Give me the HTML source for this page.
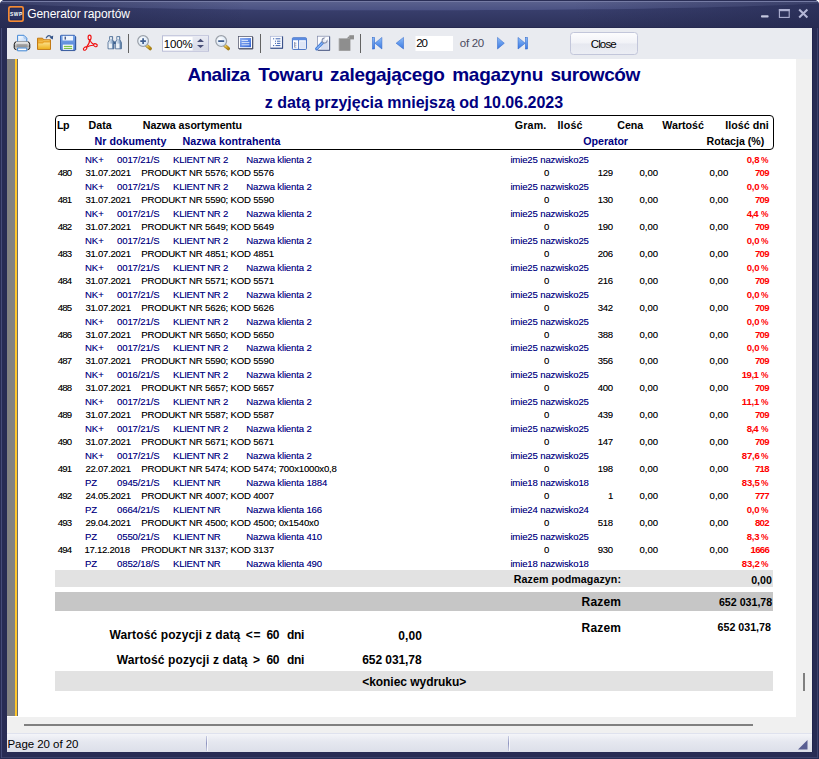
<!DOCTYPE html>
<html lang="pl">
<head>
<meta charset="utf-8">
<title>Generator raportów</title>
<style>
html,body{margin:0;padding:0;}
body{width:819px;height:759px;position:relative;overflow:hidden;background:#fff;font-family:"Liberation Sans",Arial,sans-serif;}
#win{position:absolute;left:0;top:0;width:819px;height:759px;background:#282c54;border-radius:5px 5px 0 0;overflow:hidden;}
#tgrad{position:absolute;left:0;top:0;width:819px;height:28px;background:linear-gradient(#3a3f6b 0px,#4c5380 2px,#474e7b 5px,#2f345d 9px,#282c54 13px,#282c54 28px);}
#lb{position:absolute;left:0;top:10px;width:1px;height:749px;background:#3a3f68;}
.t{position:absolute;white-space:pre;font-family:"Liberation Sans",Arial,sans-serif;}
#toolbar{position:absolute;left:7px;top:28px;width:805px;height:31px;background:#e9ebf0;}
#viewer{position:absolute;left:7px;top:59px;width:805px;height:674px;background:#f0f0f0;}
#gray{position:absolute;left:0;top:0;width:8px;height:657px;background:#828282;}
#yel{position:absolute;left:8px;top:0;width:2px;height:657px;background:#ffc72c;}
#dk{position:absolute;left:10px;top:0;width:1px;height:657px;background:#6a6a6a;}
#page{position:absolute;left:11px;top:0;width:778px;height:658px;background:#fff;}
#status{position:absolute;left:7px;top:733px;width:805px;height:19px;background:linear-gradient(#f4f5f9 0,#e6e8f0 40%,#dcdfe9 100%);border-top:1px solid #dfe2ee;box-sizing:border-box;}
.s{text-shadow:0 0 0 currentColor;}
.band{position:absolute;left:55px;width:718px;}
.sep{position:absolute;top:34px;width:1px;height:19px;background:#6c6c6c;}
.ico{position:absolute;}
</style>
</head>
<body>
<div id="win">
  <div style="position:absolute;left:1px;top:4px;width:1px;height:754px;background:#454b77;"></div><div style="position:absolute;left:817px;top:4px;width:1px;height:754px;background:#3e446e;"></div><div style="position:absolute;left:2px;top:757px;width:815px;height:1px;background:#3a406a;"></div><div style="position:absolute;left:812px;top:28px;width:1px;height:724px;background:#20244c;"></div>
  <!-- title bar -->
  <svg class="ico" style="left:0;top:0" width="819" height="28" viewBox="0 0 819 28">
    <defs>
      <linearGradient id="tb1" x1="0" y1="0" x2="0" y2="1"><stop offset="0" stop-color="#3b416f"/><stop offset="0.35" stop-color="#383e6c"/><stop offset="1" stop-color="#2c3159"/></linearGradient>
      <linearGradient id="tb3" x1="0" y1="0" x2="1" y2="0"><stop offset="0" stop-color="#22264c" stop-opacity="0.55"/><stop offset="0.3" stop-color="#22264c" stop-opacity="0"/><stop offset="0.7" stop-color="#22264c" stop-opacity="0"/><stop offset="1" stop-color="#22264c" stop-opacity="0.55"/></linearGradient>
      <linearGradient id="tb2" x1="0" y1="0" x2="0" y2="1"><stop offset="0" stop-color="#5b628e"/><stop offset="1" stop-color="#4a5183"/></linearGradient>
    </defs>
    <rect x="0" y="0" width="819" height="28" fill="url(#tb1)"/>
    <path d="M0 1 L819 1 L819 3.5 C760 6.5 640 10.3 410 10.3 C180 10.3 60 6.5 0 3.5 Z" fill="url(#tb2)"/>
    <rect x="0" y="2" width="819" height="25" fill="url(#tb3)"/>
    <rect x="0" y="0" width="819" height="1" fill="#2a2e56"/>
    <rect x="0" y="1" width="819" height="1" fill="#7a80a8" opacity="0.85"/>
    <rect x="0" y="27" width="819" height="1" fill="#262a50"/>
  </svg>
  <!-- app icon -->
  <svg class="ico" style="left:8px;top:6px" width="16" height="16" viewBox="0 0 16 16">
    <rect x="0.9" y="0.9" width="14.2" height="14.2" rx="1.4" fill="#2b3261" stroke="#f58a33" stroke-width="1.8"/>
    <rect x="2.3" y="2.3" width="11.4" height="11.4" rx="0.6" fill="none" stroke="#1d2858" stroke-width="0.7"/>
    <text x="8.4" y="9.9" font-size="4.9" font-weight="bold" fill="#ffffff" text-anchor="middle" letter-spacing="0.5" font-family="Liberation Sans, sans-serif">SWP</text>
  </svg>
  <!-- window buttons -->
  <svg class="ico" style="left:756px;top:4px" width="56" height="18" viewBox="0 0 56 18">
    <rect x="5" y="11.2" width="7.6" height="2.4" rx="0.8" fill="#c4c7de"/>
    <rect x="23.4" y="5.6" width="9.8" height="7.8" fill="none" stroke="#aeb1d2" stroke-width="1.1"/>
    <rect x="22.9" y="5" width="10.8" height="2.2" fill="#aeb1d2"/>
    <path d="M43.2 5.6 L51.4 13.4 M51.4 5.6 L43.2 13.4" stroke="#b4b7d6" stroke-width="2.1" fill="none"/>
  </svg>

  <div id="toolbar"></div>
  <svg class="ico" style="left:7px;top:28px" width="805" height="31" viewBox="7 28 805 31">
    <defs>
      <linearGradient id="gPr" x1="0" y1="0" x2="0" y2="1"><stop offset="0" stop-color="#fbfbfb"/><stop offset="0.3" stop-color="#d2d2d2"/><stop offset="0.6" stop-color="#b0b0b0"/><stop offset="1" stop-color="#e2e2e2"/></linearGradient>
      <linearGradient id="gPa" x1="0" y1="0" x2="1" y2="1"><stop offset="0" stop-color="#ffffff"/><stop offset="1" stop-color="#b7d3f7"/></linearGradient>
      <linearGradient id="gFo" x1="0" y1="0" x2="0" y2="1"><stop offset="0" stop-color="#fbe08a"/><stop offset="1" stop-color="#eeb21f"/></linearGradient>
      <linearGradient id="gFl" x1="0" y1="0" x2="0" y2="1"><stop offset="0" stop-color="#7aa6e8"/><stop offset="1" stop-color="#4f80d4"/></linearGradient>
      <linearGradient id="gBi" x1="0" y1="0" x2="1" y2="0"><stop offset="0" stop-color="#f2f6fb"/><stop offset="0.55" stop-color="#a9bfd8"/><stop offset="1" stop-color="#4a6e9c"/></linearGradient>
      <radialGradient id="gLe" cx="0.4" cy="0.35" r="0.7"><stop offset="0" stop-color="#ffffff"/><stop offset="1" stop-color="#cfe0f4"/></radialGradient>
      <linearGradient id="gHa" x1="0" y1="0" x2="1" y2="1"><stop offset="0" stop-color="#f0d060"/><stop offset="1" stop-color="#b8860b"/></linearGradient>
      <linearGradient id="gFs" x1="0" y1="0" x2="1" y2="1"><stop offset="0" stop-color="#8fb0f4"/><stop offset="1" stop-color="#2f62d6"/></linearGradient>
      <linearGradient id="gNv" x1="0" y1="0" x2="0" y2="1"><stop offset="0" stop-color="#8cbcf8"/><stop offset="1" stop-color="#3a78e2"/></linearGradient>
      <linearGradient id="gSp" x1="0" y1="0" x2="0" y2="1"><stop offset="0" stop-color="#e9ebf3"/><stop offset="1" stop-color="#d5d8e6"/></linearGradient>
      <linearGradient id="gBt" x1="0" y1="0" x2="0" y2="1"><stop offset="0" stop-color="#fdfdfe"/><stop offset="0.48" stop-color="#f1f2f7"/><stop offset="0.52" stop-color="#e6e8f0"/><stop offset="1" stop-color="#eceef4"/></linearGradient>
    </defs>
    <!-- printer -->
    <g>
      <path d="M17.6 42.4 L17.6 35.3 L24 35.3 L26.8 38.2 L26.8 42.4 Z" fill="url(#gPa)" stroke="#3f86d6" stroke-width="1"/>
      <path d="M24 35.5 L24 38.2 L26.6 38.2" fill="none" stroke="#8ab4e8" stroke-width="0.7"/>
      <path d="M16.4 41.6 L27.6 41.6 Q29.9 41.9 29.9 44.6 L29.9 47.6 Q29.9 49.8 27.6 49.8 L16.4 49.8 Q14.1 49.8 14.1 47.6 L14.1 44.6 Q14.1 41.9 16.4 41.6 Z" fill="url(#gPr)" stroke="#4a4a4a" stroke-width="0.5"/>
      <path d="M16.2 41.8 Q14.3 42.2 14.3 44.6 L14.3 47.6 Q14.3 49.4 16.2 49.6" fill="none" stroke="#2a2a2a" stroke-width="1"/>
      <path d="M27.8 41.8 Q29.7 42.2 29.7 44.6 L29.7 47.6 Q29.7 49.4 27.8 49.6" fill="none" stroke="#2a2a2a" stroke-width="1"/>
      <rect x="16.6" y="44.2" width="10.8" height="3" fill="#8f8f8f" opacity="0.75"/>
      <path d="M17.6 48 L17.6 50.8 L26.8 50.8 L26.8 48 Z" fill="#fff" stroke="#3f86d6" stroke-width="1"/>
    </g>
    <!-- open folder -->
    <g>
      <path d="M37.5 49.4 L37.5 38.2 L42.6 38.2 L43.8 39.8 L50.5 39.8 L50.5 49.4 Z" fill="#e9a52a" stroke="#c27a16" stroke-width="1"/>
      <path d="M38.2 49 L38.2 43.6 L42.8 43.6 L44 42.4 L49.9 42.4 L49.9 49 Z" fill="url(#gFo)"/>
      <path d="M38.6 41.2 L42.4 41.2 L43.4 40.6 L49.6 40.6" fill="none" stroke="#f4c860" stroke-width="0.8"/>
      <path d="M46 38.2 Q48.6 33.4 51.8 37.4" fill="none" stroke="#3b5a8c" stroke-width="1.1"/>
      <path d="M53.2 35.6 L52.8 39.4 L49.6 37.8 Z" fill="#2f4f86"/>
    </g>
    <!-- floppy -->
    <g>
      <path d="M60.5 36 Q60.5 35.3 61.2 35.3 L74.4 35.3 L75.5 36.4 L75.5 49.6 Q75.5 50.3 74.8 50.3 L61.2 50.3 Q60.5 50.3 60.5 49.6 Z" fill="url(#gFl)" stroke="#3a64b4" stroke-width="1"/>
      <rect x="62.6" y="35.9" width="10.4" height="4.6" fill="#eef4fd"/>
      <rect x="64.6" y="36.6" width="1.3" height="3" fill="#3a4f80"/>
      <rect x="62.8" y="44.6" width="10.4" height="5.2" fill="#ffffff"/>
      <rect x="63.8" y="45.8" width="8.4" height="1.2" fill="#7cc24a"/>
      <rect x="63.8" y="47.8" width="8.4" height="1.2" fill="#7cc24a"/>
      <path d="M61 50.6 L75.2 50.6 M75.8 36.8 L75.8 50" stroke="#2c4a86" stroke-width="0.8" opacity="0.7"/>
    </g>
    <!-- pdf -->
    <g fill="none" stroke="#f01414" stroke-width="1.15">
      <ellipse cx="89.6" cy="37.4" rx="1.5" ry="2.3"/>
      <ellipse cx="95.4" cy="45.2" rx="1.9" ry="1.4" transform="rotate(20 95.4 45.2)"/>
      <ellipse cx="85.1" cy="48.6" rx="1.9" ry="1.3" transform="rotate(-40 85.1 48.6)"/>
      <path d="M89.6 39.6 Q89.8 43.5 86.3 47.4"/>
      <path d="M89.7 39.6 Q91 43 93.7 44.6"/>
      <path d="M86.6 47.2 Q90 45.2 93.6 45.3"/>
    </g>
    <!-- binoculars -->
    <g>
      <path d="M108 48.8 L108 42.5 L109.6 39.6 L109.6 36.6 L112.6 36.6 L112.6 39.6 L114 42.5 L114 48.8 Z" fill="url(#gBi)" stroke="#44668f" stroke-width="0.8"/>
      <path d="M115.4 48.8 L115.4 42.5 L116.8 39.6 L116.8 36.6 L119.8 36.6 L119.8 39.6 L121.4 42.5 L121.4 48.8 Z" fill="url(#gBi)" stroke="#44668f" stroke-width="0.8"/>
      <rect x="113.6" y="41.4" width="2.2" height="2.6" fill="#3d618f"/>
      <rect x="109" y="43.6" width="3" height="4.6" fill="#f4f8fc" opacity="0.85"/>
      <rect x="116.4" y="43.6" width="3" height="4.6" fill="#f4f8fc" opacity="0.85"/>
      <rect x="110.2" y="37.2" width="1.6" height="2" fill="#fff" opacity="0.8"/>
      <rect x="117.4" y="37.2" width="1.6" height="2" fill="#fff" opacity="0.8"/>
    </g>
    <rect x="128" y="34" width="1" height="19" fill="#636363"/>
    <!-- zoom in -->
    <g>
      <path d="M146.6 45.4 L150.2 48.6" stroke="#9a7a1c" stroke-width="3.4" stroke-linecap="round"/>
      <path d="M146.9 45.6 L150 48.4" stroke="url(#gHa)" stroke-width="2.2" stroke-linecap="round"/>
      <circle cx="143.1" cy="41.1" r="5.4" fill="url(#gLe)" stroke="#9ba1a9" stroke-width="1.2"/>
      <path d="M140.3 41.1 L145.9 41.1 M143.1 38.3 L143.1 43.9" stroke="#3d5c8e" stroke-width="1.7"/>
    </g>
    <!-- zoom combo -->
    <rect x="162.5" y="35.8" width="46" height="15.4" fill="#fff" stroke="#b9bdd6" stroke-width="1"/>
    <rect x="192.6" y="36.3" width="15.4" height="14.4" fill="url(#gSp)"/>
    <path d="M197 42 L200.5 38.8 L204 42 Z M197 45 L200.5 48 L204 45 Z" fill="#4a5078"/>
    <!-- zoom out -->
    <g>
      <path d="M224.7 45.4 L228.3 48.6" stroke="#9a7a1c" stroke-width="3.4" stroke-linecap="round"/>
      <path d="M225 45.6 L228.1 48.4" stroke="url(#gHa)" stroke-width="2.2" stroke-linecap="round"/>
      <circle cx="221.2" cy="41.1" r="5.4" fill="url(#gLe)" stroke="#9ba1a9" stroke-width="1.2"/>
      <path d="M218.2 41.1 L224.2 41.1" stroke="#3d5c8e" stroke-width="1.8"/>
    </g>
    <!-- full screen -->
    <g>
      <rect x="238.6" y="36.6" width="13.8" height="12" fill="#fdfdff" stroke="#4a4f66" stroke-width="0.7"/>
      <rect x="240" y="38" width="11" height="9.2" fill="url(#gFs)"/>
      <path d="M241.6 40.4 L248 40.4 M241.6 42.6 L249.4 42.6 M241.6 44.8 L249.4 44.8" stroke="#e8eefc" stroke-width="0.9"/>
      <path d="M239 49 L252.8 49 M252.8 37 L252.8 49" stroke="#30354f" stroke-width="0.8"/>
    </g>
    <rect x="260" y="34" width="1" height="19" fill="#636363"/>
    <!-- outline -->
    <g>
      <rect x="270.6" y="36.3" width="11.6" height="11.6" fill="#fbfcff" stroke="#a8b4d4" stroke-width="0.7"/>
      <path d="M270.4 48.3 L282.8 48.3 M282.6 36.4 L282.6 48.4" stroke="#2e4680" stroke-width="1"/>
      <path d="M273 38.8 L274.2 38.8 M275.6 38.8 L280.4 38.8 M275 41.2 L276 41.2 M277 41.2 L280.4 41.2 M275 43.4 L276 43.4 M277 43.4 L280.4 43.4 M273 45.6 L274.2 45.6 M275.6 45.6 L280.4 45.6" stroke="#3f64b0" stroke-width="1"/>
    </g>
    <!-- thumbnails -->
    <g>
      <rect x="292.4" y="37.8" width="14" height="11.6" rx="0.8" fill="#fdfdff" stroke="#3f6cc0" stroke-width="1"/>
      <rect x="292.4" y="37.8" width="14" height="2.4" fill="#5b8be0"/>
      <path d="M298.6 40 L298.6 49.4" stroke="#3f6cc0" stroke-width="0.9"/>
      <rect x="299.8" y="41.4" width="5.6" height="7" fill="#dfe6f6"/>
      <path d="M294.6 42 L294.6 47.4 M294.6 43.2 L296.4 43.2 M294.6 45.2 L296.4 45.2 M294.6 47.2 L296.4 47.2" stroke="#7a86a8" stroke-width="0.8" fill="none"/>
    </g>
    <!-- page setup wrench -->
    <g>
      <rect x="317.6" y="36.2" width="11.8" height="13.8" fill="#fbfcff" stroke="#7f88a8" stroke-width="0.7"/>
      <rect x="320.6" y="41" width="8" height="8.2" fill="#d8def0"/>
      <path d="M329.7 36.6 L329.7 50.4 M317.8 50.4 L329.8 50.4" stroke="#3a4a78" stroke-width="0.8"/>
      <path d="M316.6 48.8 L322.6 42.6" stroke="#3f7ad8" stroke-width="3" stroke-linecap="round"/>
      <path d="M316.9 48.5 L322.4 42.9" stroke="#8db6f2" stroke-width="1.2" stroke-linecap="round"/>
      <circle cx="324.6" cy="40.6" r="2.5" fill="#e8ecf6" stroke="#8a92ac" stroke-width="1.1"/>
      <rect x="324.8" y="37.4" width="2.8" height="2.6" fill="#fbfcff" transform="rotate(45 326 38.6)"/>
    </g>
    <!-- disabled icon -->
    <g fill="#8e8e8e">
      <path d="M339 38.4 L350.4 38.4 L350.4 50.8 L339 50.8 Z"/>
      <path d="M349.4 35.2 L354 35.2 L354 39.4 L349.4 39.4 Z"/>
      <path d="M346.6 38.4 L349.6 35.4 L349.6 38.4 Z"/>
      <rect x="338.6" y="38.4" width="0.8" height="12.4" fill="#b4b4b4"/>
    </g>
    <rect x="360" y="34" width="1" height="19" fill="#636363"/>
    <!-- nav -->
    <g fill="url(#gNv)" stroke="#2a62c8" stroke-width="0.5">
      <rect x="372.5" y="37.4" width="2.2" height="11.6"/>
      <path d="M381.9 37.4 L381.9 49 L374.9 43.2 Z"/>
      <path d="M403.5 37.4 L403.5 49 L396.1 43.2 Z"/>
      <path d="M497.5 37.4 L497.5 49 L504.3 43.2 Z"/>
      <path d="M518 37.4 L518 49 L525.2 43.2 Z"/>
      <rect x="525.4" y="37.4" width="2.2" height="11.6"/>
    </g>
    <!-- page input -->
    <rect x="415.5" y="36" width="37.5" height="15" fill="#fff"/>
    <!-- close button -->
    <rect x="570.5" y="32.5" width="67" height="22" rx="3" fill="url(#gBt)" stroke="#c2c6da" stroke-width="1"/>
  </svg>

  <div id="viewer">
    <div style="position:absolute;left:0;top:657px;width:11px;height:1px;background:#fff;"></div><div id="gray"></div><div id="yel"></div><div id="dk"></div><div id="page"></div>
    <!-- scroll thumbs -->
    <div style="position:absolute;left:796px;top:614px;width:2px;height:18px;background:#808080;"></div>
    <div style="position:absolute;left:17px;top:665px;width:729px;height:2px;background:#808080;"></div>
  </div>
  <!-- header box -->
  <div style="position:absolute;left:55px;top:115px;width:719px;height:35px;box-sizing:border-box;border:1px solid #000;border-radius:4px;"></div>
  <!-- bands -->
  <div class="band" style="top:570px;height:17px;background:#e2e2e2;"></div>
  <div class="band" style="top:592px;height:19px;background:#c6c6c6;"></div>
  <div class="band" style="top:671px;height:20px;background:#e2e2e2;"></div>

  <div id="status">
    <div style="position:absolute;left:199px;top:2px;width:1px;height:15px;background:linear-gradient(#c9cde2,#8e94c0 50%,#c9cde2);"></div><div style="position:absolute;left:200px;top:2px;width:1px;height:15px;background:#f6f7fb;"></div>
    <div style="position:absolute;left:501px;top:2px;width:1px;height:15px;background:linear-gradient(#c9cde2,#8e94c0 50%,#c9cde2);"></div><div style="position:absolute;left:502px;top:2px;width:1px;height:15px;background:#f6f7fb;"></div>
    <svg class="ico" style="left:790px;top:5px" width="12" height="12" viewBox="0 0 12 12"><path d="M10.5 1 L10.5 10.5 L1 10.5Z" fill="#585e92"/></svg>
  </div>
<span class="t" style="top:65px;font-size:19px;line-height:19px;color:#000080;font-weight:bold;letter-spacing:-0.650px;left:187.50px;">Analiza</span>
<span class="t" style="top:65px;font-size:19px;line-height:19px;color:#000080;font-weight:bold;letter-spacing:-0.200px;left:258.20px;">Towaru</span>
<span class="t" style="top:65px;font-size:19px;line-height:19px;color:#000080;font-weight:bold;letter-spacing:-0.309px;left:330.00px;">zalegającego</span>
<span class="t" style="top:65px;font-size:19px;line-height:19px;color:#000080;font-weight:bold;letter-spacing:-0.257px;left:452.20px;">magazynu</span>
<span class="t" style="top:65px;font-size:19px;line-height:19px;color:#000080;font-weight:bold;letter-spacing:-0.429px;left:550.40px;">surowców</span>
<span class="t" style="top:95px;font-size:16px;line-height:16px;color:#000080;font-weight:bold;letter-spacing:-0.013px;left:264.80px;">z datą przyjęcia mniejszą od 10.06.2023</span>
<span class="t" style="top:120px;font-size:10.67px;line-height:10.67px;color:#000;font-weight:bold;letter-spacing:-0.500px;left:57.00px;">Lp</span>
<span class="t" style="top:120px;font-size:10.67px;line-height:10.67px;color:#000;font-weight:bold;letter-spacing:-0.033px;left:88.60px;">Data</span>
<span class="t" style="top:120px;font-size:10.67px;line-height:10.67px;color:#000;font-weight:bold;letter-spacing:-0.050px;left:142.80px;">Nazwa asortymentu</span>
<span class="t" style="top:120px;font-size:10.67px;line-height:10.67px;color:#000;font-weight:bold;letter-spacing:0.200px;left:514.70px;">Gram.</span>
<span class="t" style="top:120px;font-size:10.67px;line-height:10.67px;color:#000;font-weight:bold;letter-spacing:0.200px;left:557.40px;">Ilość</span>
<span class="t" style="top:120px;font-size:10.67px;line-height:10.67px;color:#000;font-weight:bold;letter-spacing:-0.100px;left:617.30px;">Cena</span>
<span class="t" style="top:120px;font-size:10.67px;line-height:10.67px;color:#000;font-weight:bold;letter-spacing:0.000px;left:662.30px;">Wartość</span>
<span class="t" style="top:120px;font-size:10.67px;line-height:10.67px;color:#000;font-weight:bold;letter-spacing:0.038px;left:725.30px;">Ilość dni</span>
<span class="t" style="top:136px;font-size:10.67px;line-height:10.67px;color:#000080;font-weight:bold;letter-spacing:0.009px;left:94.60px;">Nr dokumenty</span>
<span class="t" style="top:136px;font-size:10.67px;line-height:10.67px;color:#000080;font-weight:bold;letter-spacing:0.050px;left:182.60px;">Nazwa kontrahenta</span>
<span class="t" style="top:136px;font-size:10.67px;line-height:10.67px;color:#000080;font-weight:bold;letter-spacing:-0.043px;left:583.30px;">Operator</span>
<span class="t" style="top:136px;font-size:10.67px;line-height:10.67px;color:#000;font-weight:bold;letter-spacing:-0.040px;left:706.60px;">Rotacja (%)</span>
<span class="t" style="top:155px;font-size:9.6px;line-height:9.6px;color:#000080;letter-spacing:-0.100px;left:85.00px;text-shadow:0 0 0 rgba(0,0,128,.4);">NK+</span>
<span class="t" style="top:155px;font-size:9.6px;line-height:9.6px;color:#000080;letter-spacing:-0.138px;left:117.00px;text-shadow:0 0 0 rgba(0,0,128,.4);">0017/21/S</span>
<span class="t" style="top:155px;font-size:9.6px;line-height:9.6px;color:#000080;letter-spacing:-0.270px;left:173.00px;text-shadow:0 0 0 rgba(0,0,128,.4);">KLIENT NR 2</span>
<span class="t" style="top:155px;font-size:9.6px;line-height:9.6px;color:#000080;letter-spacing:-0.164px;left:246.30px;text-shadow:0 0 0 rgba(0,0,128,.4);">Nazwa klienta 2</span>
<span class="t" style="top:155px;font-size:9.6px;line-height:9.6px;color:#000080;letter-spacing:-0.156px;left:510.40px;text-shadow:0 0 0 rgba(0,0,128,.4);">imie25 nazwisko25</span>
<span class="t" style="top:155px;font-size:9.6px;line-height:9.6px;color:#ff0000;font-weight:bold;letter-spacing:-0.250px;left:746.70px;">0,8</span>
<span class="t" style="top:155px;font-size:9.6px;line-height:9.6px;color:#ff0000;font-weight:bold;transform:scaleX(0.88);transform-origin:0.0px 0;left:761.20px;">%</span>
<span class="t" style="top:182px;font-size:9.6px;line-height:9.6px;color:#000080;letter-spacing:-0.100px;left:85.00px;text-shadow:0 0 0 rgba(0,0,128,.4);">NK+</span>
<span class="t" style="top:182px;font-size:9.6px;line-height:9.6px;color:#000080;letter-spacing:-0.138px;left:117.00px;text-shadow:0 0 0 rgba(0,0,128,.4);">0017/21/S</span>
<span class="t" style="top:182px;font-size:9.6px;line-height:9.6px;color:#000080;letter-spacing:-0.270px;left:173.00px;text-shadow:0 0 0 rgba(0,0,128,.4);">KLIENT NR 2</span>
<span class="t" style="top:182px;font-size:9.6px;line-height:9.6px;color:#000080;letter-spacing:-0.164px;left:246.30px;text-shadow:0 0 0 rgba(0,0,128,.4);">Nazwa klienta 2</span>
<span class="t" style="top:182px;font-size:9.6px;line-height:9.6px;color:#000080;letter-spacing:-0.156px;left:510.40px;text-shadow:0 0 0 rgba(0,0,128,.4);">imie25 nazwisko25</span>
<span class="t" style="top:182px;font-size:9.6px;line-height:9.6px;color:#ff0000;font-weight:bold;letter-spacing:-0.250px;left:746.70px;">0,0</span>
<span class="t" style="top:182px;font-size:9.6px;line-height:9.6px;color:#ff0000;font-weight:bold;transform:scaleX(0.88);transform-origin:0.0px 0;left:761.20px;">%</span>
<span class="t" style="top:209px;font-size:9.6px;line-height:9.6px;color:#000080;letter-spacing:-0.100px;left:85.00px;text-shadow:0 0 0 rgba(0,0,128,.4);">NK+</span>
<span class="t" style="top:209px;font-size:9.6px;line-height:9.6px;color:#000080;letter-spacing:-0.138px;left:117.00px;text-shadow:0 0 0 rgba(0,0,128,.4);">0017/21/S</span>
<span class="t" style="top:209px;font-size:9.6px;line-height:9.6px;color:#000080;letter-spacing:-0.270px;left:173.00px;text-shadow:0 0 0 rgba(0,0,128,.4);">KLIENT NR 2</span>
<span class="t" style="top:209px;font-size:9.6px;line-height:9.6px;color:#000080;letter-spacing:-0.164px;left:246.30px;text-shadow:0 0 0 rgba(0,0,128,.4);">Nazwa klienta 2</span>
<span class="t" style="top:209px;font-size:9.6px;line-height:9.6px;color:#000080;letter-spacing:-0.156px;left:510.40px;text-shadow:0 0 0 rgba(0,0,128,.4);">imie25 nazwisko25</span>
<span class="t" style="top:209px;font-size:9.6px;line-height:9.6px;color:#ff0000;font-weight:bold;letter-spacing:-0.750px;left:746.70px;">4,4</span>
<span class="t" style="top:209px;font-size:9.6px;line-height:9.6px;color:#ff0000;font-weight:bold;transform:scaleX(0.88);transform-origin:0.0px 0;left:761.20px;">%</span>
<span class="t" style="top:236px;font-size:9.6px;line-height:9.6px;color:#000080;letter-spacing:-0.100px;left:85.00px;text-shadow:0 0 0 rgba(0,0,128,.4);">NK+</span>
<span class="t" style="top:236px;font-size:9.6px;line-height:9.6px;color:#000080;letter-spacing:-0.138px;left:117.00px;text-shadow:0 0 0 rgba(0,0,128,.4);">0017/21/S</span>
<span class="t" style="top:236px;font-size:9.6px;line-height:9.6px;color:#000080;letter-spacing:-0.270px;left:173.00px;text-shadow:0 0 0 rgba(0,0,128,.4);">KLIENT NR 2</span>
<span class="t" style="top:236px;font-size:9.6px;line-height:9.6px;color:#000080;letter-spacing:-0.164px;left:246.30px;text-shadow:0 0 0 rgba(0,0,128,.4);">Nazwa klienta 2</span>
<span class="t" style="top:236px;font-size:9.6px;line-height:9.6px;color:#000080;letter-spacing:-0.156px;left:510.40px;text-shadow:0 0 0 rgba(0,0,128,.4);">imie25 nazwisko25</span>
<span class="t" style="top:236px;font-size:9.6px;line-height:9.6px;color:#ff0000;font-weight:bold;letter-spacing:-0.250px;left:746.70px;">0,0</span>
<span class="t" style="top:236px;font-size:9.6px;line-height:9.6px;color:#ff0000;font-weight:bold;transform:scaleX(0.88);transform-origin:0.0px 0;left:761.20px;">%</span>
<span class="t" style="top:263px;font-size:9.6px;line-height:9.6px;color:#000080;letter-spacing:-0.100px;left:85.00px;text-shadow:0 0 0 rgba(0,0,128,.4);">NK+</span>
<span class="t" style="top:263px;font-size:9.6px;line-height:9.6px;color:#000080;letter-spacing:-0.138px;left:117.00px;text-shadow:0 0 0 rgba(0,0,128,.4);">0017/21/S</span>
<span class="t" style="top:263px;font-size:9.6px;line-height:9.6px;color:#000080;letter-spacing:-0.270px;left:173.00px;text-shadow:0 0 0 rgba(0,0,128,.4);">KLIENT NR 2</span>
<span class="t" style="top:263px;font-size:9.6px;line-height:9.6px;color:#000080;letter-spacing:-0.164px;left:246.30px;text-shadow:0 0 0 rgba(0,0,128,.4);">Nazwa klienta 2</span>
<span class="t" style="top:263px;font-size:9.6px;line-height:9.6px;color:#000080;letter-spacing:-0.156px;left:510.40px;text-shadow:0 0 0 rgba(0,0,128,.4);">imie25 nazwisko25</span>
<span class="t" style="top:263px;font-size:9.6px;line-height:9.6px;color:#ff0000;font-weight:bold;letter-spacing:-0.250px;left:746.70px;">0,0</span>
<span class="t" style="top:263px;font-size:9.6px;line-height:9.6px;color:#ff0000;font-weight:bold;transform:scaleX(0.88);transform-origin:0.0px 0;left:761.20px;">%</span>
<span class="t" style="top:290px;font-size:9.6px;line-height:9.6px;color:#000080;letter-spacing:-0.100px;left:85.00px;text-shadow:0 0 0 rgba(0,0,128,.4);">NK+</span>
<span class="t" style="top:290px;font-size:9.6px;line-height:9.6px;color:#000080;letter-spacing:-0.138px;left:117.00px;text-shadow:0 0 0 rgba(0,0,128,.4);">0017/21/S</span>
<span class="t" style="top:290px;font-size:9.6px;line-height:9.6px;color:#000080;letter-spacing:-0.270px;left:173.00px;text-shadow:0 0 0 rgba(0,0,128,.4);">KLIENT NR 2</span>
<span class="t" style="top:290px;font-size:9.6px;line-height:9.6px;color:#000080;letter-spacing:-0.164px;left:246.30px;text-shadow:0 0 0 rgba(0,0,128,.4);">Nazwa klienta 2</span>
<span class="t" style="top:290px;font-size:9.6px;line-height:9.6px;color:#000080;letter-spacing:-0.156px;left:510.40px;text-shadow:0 0 0 rgba(0,0,128,.4);">imie25 nazwisko25</span>
<span class="t" style="top:290px;font-size:9.6px;line-height:9.6px;color:#ff0000;font-weight:bold;letter-spacing:-0.250px;left:746.70px;">0,0</span>
<span class="t" style="top:290px;font-size:9.6px;line-height:9.6px;color:#ff0000;font-weight:bold;transform:scaleX(0.88);transform-origin:0.0px 0;left:761.20px;">%</span>
<span class="t" style="top:317px;font-size:9.6px;line-height:9.6px;color:#000080;letter-spacing:-0.100px;left:85.00px;text-shadow:0 0 0 rgba(0,0,128,.4);">NK+</span>
<span class="t" style="top:317px;font-size:9.6px;line-height:9.6px;color:#000080;letter-spacing:-0.138px;left:117.00px;text-shadow:0 0 0 rgba(0,0,128,.4);">0017/21/S</span>
<span class="t" style="top:317px;font-size:9.6px;line-height:9.6px;color:#000080;letter-spacing:-0.270px;left:173.00px;text-shadow:0 0 0 rgba(0,0,128,.4);">KLIENT NR 2</span>
<span class="t" style="top:317px;font-size:9.6px;line-height:9.6px;color:#000080;letter-spacing:-0.164px;left:246.30px;text-shadow:0 0 0 rgba(0,0,128,.4);">Nazwa klienta 2</span>
<span class="t" style="top:317px;font-size:9.6px;line-height:9.6px;color:#000080;letter-spacing:-0.156px;left:510.40px;text-shadow:0 0 0 rgba(0,0,128,.4);">imie25 nazwisko25</span>
<span class="t" style="top:317px;font-size:9.6px;line-height:9.6px;color:#ff0000;font-weight:bold;letter-spacing:-0.250px;left:746.70px;">0,0</span>
<span class="t" style="top:317px;font-size:9.6px;line-height:9.6px;color:#ff0000;font-weight:bold;transform:scaleX(0.88);transform-origin:0.0px 0;left:761.20px;">%</span>
<span class="t" style="top:343px;font-size:9.6px;line-height:9.6px;color:#000080;letter-spacing:-0.100px;left:85.00px;text-shadow:0 0 0 rgba(0,0,128,.4);">NK+</span>
<span class="t" style="top:343px;font-size:9.6px;line-height:9.6px;color:#000080;letter-spacing:-0.138px;left:117.00px;text-shadow:0 0 0 rgba(0,0,128,.4);">0017/21/S</span>
<span class="t" style="top:343px;font-size:9.6px;line-height:9.6px;color:#000080;letter-spacing:-0.270px;left:173.00px;text-shadow:0 0 0 rgba(0,0,128,.4);">KLIENT NR 2</span>
<span class="t" style="top:343px;font-size:9.6px;line-height:9.6px;color:#000080;letter-spacing:-0.164px;left:246.30px;text-shadow:0 0 0 rgba(0,0,128,.4);">Nazwa klienta 2</span>
<span class="t" style="top:343px;font-size:9.6px;line-height:9.6px;color:#000080;letter-spacing:-0.156px;left:510.40px;text-shadow:0 0 0 rgba(0,0,128,.4);">imie25 nazwisko25</span>
<span class="t" style="top:343px;font-size:9.6px;line-height:9.6px;color:#ff0000;font-weight:bold;letter-spacing:-0.250px;left:746.70px;">0,0</span>
<span class="t" style="top:343px;font-size:9.6px;line-height:9.6px;color:#ff0000;font-weight:bold;transform:scaleX(0.88);transform-origin:0.0px 0;left:761.20px;">%</span>
<span class="t" style="top:370px;font-size:9.6px;line-height:9.6px;color:#000080;letter-spacing:-0.100px;left:85.00px;text-shadow:0 0 0 rgba(0,0,128,.4);">NK+</span>
<span class="t" style="top:370px;font-size:9.6px;line-height:9.6px;color:#000080;letter-spacing:-0.138px;left:117.00px;text-shadow:0 0 0 rgba(0,0,128,.4);">0016/21/S</span>
<span class="t" style="top:370px;font-size:9.6px;line-height:9.6px;color:#000080;letter-spacing:-0.270px;left:173.00px;text-shadow:0 0 0 rgba(0,0,128,.4);">KLIENT NR 2</span>
<span class="t" style="top:370px;font-size:9.6px;line-height:9.6px;color:#000080;letter-spacing:-0.164px;left:246.30px;text-shadow:0 0 0 rgba(0,0,128,.4);">Nazwa klienta 2</span>
<span class="t" style="top:370px;font-size:9.6px;line-height:9.6px;color:#000080;letter-spacing:-0.156px;left:510.40px;text-shadow:0 0 0 rgba(0,0,128,.4);">imie25 nazwisko25</span>
<span class="t" style="top:370px;font-size:9.6px;line-height:9.6px;color:#ff0000;font-weight:bold;letter-spacing:-0.533px;left:741.80px;">19,1</span>
<span class="t" style="top:370px;font-size:9.6px;line-height:9.6px;color:#ff0000;font-weight:bold;transform:scaleX(0.88);transform-origin:0.0px 0;left:761.20px;">%</span>
<span class="t" style="top:397px;font-size:9.6px;line-height:9.6px;color:#000080;letter-spacing:-0.100px;left:85.00px;text-shadow:0 0 0 rgba(0,0,128,.4);">NK+</span>
<span class="t" style="top:397px;font-size:9.6px;line-height:9.6px;color:#000080;letter-spacing:-0.138px;left:117.00px;text-shadow:0 0 0 rgba(0,0,128,.4);">0017/21/S</span>
<span class="t" style="top:397px;font-size:9.6px;line-height:9.6px;color:#000080;letter-spacing:-0.270px;left:173.00px;text-shadow:0 0 0 rgba(0,0,128,.4);">KLIENT NR 2</span>
<span class="t" style="top:397px;font-size:9.6px;line-height:9.6px;color:#000080;letter-spacing:-0.164px;left:246.30px;text-shadow:0 0 0 rgba(0,0,128,.4);">Nazwa klienta 2</span>
<span class="t" style="top:397px;font-size:9.6px;line-height:9.6px;color:#000080;letter-spacing:-0.156px;left:510.40px;text-shadow:0 0 0 rgba(0,0,128,.4);">imie25 nazwisko25</span>
<span class="t" style="top:397px;font-size:9.6px;line-height:9.6px;color:#ff0000;font-weight:bold;letter-spacing:-0.200px;left:741.80px;">11,1</span>
<span class="t" style="top:397px;font-size:9.6px;line-height:9.6px;color:#ff0000;font-weight:bold;transform:scaleX(0.88);transform-origin:0.0px 0;left:761.20px;">%</span>
<span class="t" style="top:424px;font-size:9.6px;line-height:9.6px;color:#000080;letter-spacing:-0.100px;left:85.00px;text-shadow:0 0 0 rgba(0,0,128,.4);">NK+</span>
<span class="t" style="top:424px;font-size:9.6px;line-height:9.6px;color:#000080;letter-spacing:-0.138px;left:117.00px;text-shadow:0 0 0 rgba(0,0,128,.4);">0017/21/S</span>
<span class="t" style="top:424px;font-size:9.6px;line-height:9.6px;color:#000080;letter-spacing:-0.270px;left:173.00px;text-shadow:0 0 0 rgba(0,0,128,.4);">KLIENT NR 2</span>
<span class="t" style="top:424px;font-size:9.6px;line-height:9.6px;color:#000080;letter-spacing:-0.164px;left:246.30px;text-shadow:0 0 0 rgba(0,0,128,.4);">Nazwa klienta 2</span>
<span class="t" style="top:424px;font-size:9.6px;line-height:9.6px;color:#000080;letter-spacing:-0.156px;left:510.40px;text-shadow:0 0 0 rgba(0,0,128,.4);">imie25 nazwisko25</span>
<span class="t" style="top:424px;font-size:9.6px;line-height:9.6px;color:#ff0000;font-weight:bold;letter-spacing:-0.750px;left:746.70px;">8,4</span>
<span class="t" style="top:424px;font-size:9.6px;line-height:9.6px;color:#ff0000;font-weight:bold;transform:scaleX(0.88);transform-origin:0.0px 0;left:761.20px;">%</span>
<span class="t" style="top:451px;font-size:9.6px;line-height:9.6px;color:#000080;letter-spacing:-0.100px;left:85.00px;text-shadow:0 0 0 rgba(0,0,128,.4);">NK+</span>
<span class="t" style="top:451px;font-size:9.6px;line-height:9.6px;color:#000080;letter-spacing:-0.138px;left:117.00px;text-shadow:0 0 0 rgba(0,0,128,.4);">0017/21/S</span>
<span class="t" style="top:451px;font-size:9.6px;line-height:9.6px;color:#000080;letter-spacing:-0.270px;left:173.00px;text-shadow:0 0 0 rgba(0,0,128,.4);">KLIENT NR 2</span>
<span class="t" style="top:451px;font-size:9.6px;line-height:9.6px;color:#000080;letter-spacing:-0.164px;left:246.30px;text-shadow:0 0 0 rgba(0,0,128,.4);">Nazwa klienta 2</span>
<span class="t" style="top:451px;font-size:9.6px;line-height:9.6px;color:#000080;letter-spacing:-0.156px;left:510.40px;text-shadow:0 0 0 rgba(0,0,128,.4);">imie25 nazwisko25</span>
<span class="t" style="top:451px;font-size:9.6px;line-height:9.6px;color:#ff0000;font-weight:bold;letter-spacing:-0.200px;left:741.80px;">87,6</span>
<span class="t" style="top:451px;font-size:9.6px;line-height:9.6px;color:#ff0000;font-weight:bold;transform:scaleX(0.88);transform-origin:0.0px 0;left:761.20px;">%</span>
<span class="t" style="top:478px;font-size:9.6px;line-height:9.6px;color:#000080;letter-spacing:-0.100px;left:85.00px;text-shadow:0 0 0 rgba(0,0,128,.4);">PZ</span>
<span class="t" style="top:478px;font-size:9.6px;line-height:9.6px;color:#000080;letter-spacing:-0.138px;left:117.00px;text-shadow:0 0 0 rgba(0,0,128,.4);">0945/21/S</span>
<span class="t" style="top:478px;font-size:9.6px;line-height:9.6px;color:#000080;letter-spacing:-0.270px;left:173.00px;text-shadow:0 0 0 rgba(0,0,128,.4);">KLIENT NR</span>
<span class="t" style="top:478px;font-size:9.6px;line-height:9.6px;color:#000080;letter-spacing:-0.164px;left:246.30px;text-shadow:0 0 0 rgba(0,0,128,.4);">Nazwa klienta 1884</span>
<span class="t" style="top:478px;font-size:9.6px;line-height:9.6px;color:#000080;letter-spacing:-0.156px;left:510.40px;text-shadow:0 0 0 rgba(0,0,128,.4);">imie18 nazwisko18</span>
<span class="t" style="top:478px;font-size:9.6px;line-height:9.6px;color:#ff0000;font-weight:bold;letter-spacing:-0.200px;left:741.80px;">83,5</span>
<span class="t" style="top:478px;font-size:9.6px;line-height:9.6px;color:#ff0000;font-weight:bold;transform:scaleX(0.88);transform-origin:0.0px 0;left:761.20px;">%</span>
<span class="t" style="top:505px;font-size:9.6px;line-height:9.6px;color:#000080;letter-spacing:-0.100px;left:85.00px;text-shadow:0 0 0 rgba(0,0,128,.4);">PZ</span>
<span class="t" style="top:505px;font-size:9.6px;line-height:9.6px;color:#000080;letter-spacing:-0.138px;left:117.00px;text-shadow:0 0 0 rgba(0,0,128,.4);">0664/21/S</span>
<span class="t" style="top:505px;font-size:9.6px;line-height:9.6px;color:#000080;letter-spacing:-0.270px;left:173.00px;text-shadow:0 0 0 rgba(0,0,128,.4);">KLIENT NR</span>
<span class="t" style="top:505px;font-size:9.6px;line-height:9.6px;color:#000080;letter-spacing:-0.164px;left:246.30px;text-shadow:0 0 0 rgba(0,0,128,.4);">Nazwa klienta 166</span>
<span class="t" style="top:505px;font-size:9.6px;line-height:9.6px;color:#000080;letter-spacing:-0.156px;left:510.40px;text-shadow:0 0 0 rgba(0,0,128,.4);">imie24 nazwisko24</span>
<span class="t" style="top:505px;font-size:9.6px;line-height:9.6px;color:#ff0000;font-weight:bold;letter-spacing:-0.250px;left:746.70px;">0,0</span>
<span class="t" style="top:505px;font-size:9.6px;line-height:9.6px;color:#ff0000;font-weight:bold;transform:scaleX(0.88);transform-origin:0.0px 0;left:761.20px;">%</span>
<span class="t" style="top:532px;font-size:9.6px;line-height:9.6px;color:#000080;letter-spacing:-0.100px;left:85.00px;text-shadow:0 0 0 rgba(0,0,128,.4);">PZ</span>
<span class="t" style="top:532px;font-size:9.6px;line-height:9.6px;color:#000080;letter-spacing:-0.138px;left:117.00px;text-shadow:0 0 0 rgba(0,0,128,.4);">0550/21/S</span>
<span class="t" style="top:532px;font-size:9.6px;line-height:9.6px;color:#000080;letter-spacing:-0.270px;left:173.00px;text-shadow:0 0 0 rgba(0,0,128,.4);">KLIENT NR</span>
<span class="t" style="top:532px;font-size:9.6px;line-height:9.6px;color:#000080;letter-spacing:-0.164px;left:246.30px;text-shadow:0 0 0 rgba(0,0,128,.4);">Nazwa klienta 410</span>
<span class="t" style="top:532px;font-size:9.6px;line-height:9.6px;color:#000080;letter-spacing:-0.156px;left:510.40px;text-shadow:0 0 0 rgba(0,0,128,.4);">imie25 nazwisko25</span>
<span class="t" style="top:532px;font-size:9.6px;line-height:9.6px;color:#ff0000;font-weight:bold;letter-spacing:-0.250px;left:746.70px;">8,3</span>
<span class="t" style="top:532px;font-size:9.6px;line-height:9.6px;color:#ff0000;font-weight:bold;transform:scaleX(0.88);transform-origin:0.0px 0;left:761.20px;">%</span>
<span class="t" style="top:559px;font-size:9.6px;line-height:9.6px;color:#000080;letter-spacing:-0.100px;left:85.00px;text-shadow:0 0 0 rgba(0,0,128,.4);">PZ</span>
<span class="t" style="top:559px;font-size:9.6px;line-height:9.6px;color:#000080;letter-spacing:-0.138px;left:117.00px;text-shadow:0 0 0 rgba(0,0,128,.4);">0852/18/S</span>
<span class="t" style="top:559px;font-size:9.6px;line-height:9.6px;color:#000080;letter-spacing:-0.270px;left:173.00px;text-shadow:0 0 0 rgba(0,0,128,.4);">KLIENT NR</span>
<span class="t" style="top:559px;font-size:9.6px;line-height:9.6px;color:#000080;letter-spacing:-0.164px;left:246.30px;text-shadow:0 0 0 rgba(0,0,128,.4);">Nazwa klienta 490</span>
<span class="t" style="top:559px;font-size:9.6px;line-height:9.6px;color:#000080;letter-spacing:-0.156px;left:510.40px;text-shadow:0 0 0 rgba(0,0,128,.4);">imie18 nazwisko18</span>
<span class="t" style="top:559px;font-size:9.6px;line-height:9.6px;color:#ff0000;font-weight:bold;letter-spacing:-0.200px;left:741.80px;">83,2</span>
<span class="t" style="top:559px;font-size:9.6px;line-height:9.6px;color:#ff0000;font-weight:bold;transform:scaleX(0.88);transform-origin:0.0px 0;left:761.20px;">%</span>
<span class="t" style="top:168px;font-size:9.6px;line-height:9.6px;color:#000;letter-spacing:-0.800px;left:57.70px;text-shadow:0 0 0 rgba(0,0,0,.4);">480</span>
<span class="t" style="top:168px;font-size:9.6px;line-height:9.6px;color:#000;letter-spacing:-0.267px;left:85.40px;text-shadow:0 0 0 rgba(0,0,0,.4);">31.07.2021</span>
<span class="t" style="top:168px;font-size:9.6px;line-height:9.6px;color:#000;letter-spacing:-0.192px;left:141.20px;text-shadow:0 0 0 rgba(0,0,0,.4);">PRODUKT NR 5576; KOD 5576</span>
<span class="t" style="top:168px;font-size:9.6px;line-height:9.6px;color:#000;left:544.00px;text-shadow:0 0 0 rgba(0,0,0,.4);">0</span>
<span class="t" style="top:168px;font-size:9.6px;line-height:9.6px;color:#000;letter-spacing:-0.400px;left:597.80px;text-shadow:0 0 0 rgba(0,0,0,.4);">129</span>
<span class="t" style="top:168px;font-size:9.6px;line-height:9.6px;color:#000;left:639.40px;text-shadow:0 0 0 rgba(0,0,0,.4);">0,00</span>
<span class="t" style="top:168px;font-size:9.6px;line-height:9.6px;color:#000;left:709.60px;text-shadow:0 0 0 rgba(0,0,0,.4);">0,00</span>
<span class="t" style="top:168px;font-size:9.6px;line-height:9.6px;color:#ff0000;font-weight:bold;letter-spacing:-0.700px;left:754.90px;">709</span>
<span class="t" style="top:195px;font-size:9.6px;line-height:9.6px;color:#000;letter-spacing:-0.800px;left:57.70px;text-shadow:0 0 0 rgba(0,0,0,.4);">481</span>
<span class="t" style="top:195px;font-size:9.6px;line-height:9.6px;color:#000;letter-spacing:-0.267px;left:85.40px;text-shadow:0 0 0 rgba(0,0,0,.4);">31.07.2021</span>
<span class="t" style="top:195px;font-size:9.6px;line-height:9.6px;color:#000;letter-spacing:-0.192px;left:141.20px;text-shadow:0 0 0 rgba(0,0,0,.4);">PRODUKT NR 5590; KOD 5590</span>
<span class="t" style="top:195px;font-size:9.6px;line-height:9.6px;color:#000;left:544.00px;text-shadow:0 0 0 rgba(0,0,0,.4);">0</span>
<span class="t" style="top:195px;font-size:9.6px;line-height:9.6px;color:#000;letter-spacing:-0.400px;left:597.80px;text-shadow:0 0 0 rgba(0,0,0,.4);">130</span>
<span class="t" style="top:195px;font-size:9.6px;line-height:9.6px;color:#000;left:639.40px;text-shadow:0 0 0 rgba(0,0,0,.4);">0,00</span>
<span class="t" style="top:195px;font-size:9.6px;line-height:9.6px;color:#000;left:709.60px;text-shadow:0 0 0 rgba(0,0,0,.4);">0,00</span>
<span class="t" style="top:195px;font-size:9.6px;line-height:9.6px;color:#ff0000;font-weight:bold;letter-spacing:-0.700px;left:754.90px;">709</span>
<span class="t" style="top:222px;font-size:9.6px;line-height:9.6px;color:#000;letter-spacing:-0.800px;left:57.70px;text-shadow:0 0 0 rgba(0,0,0,.4);">482</span>
<span class="t" style="top:222px;font-size:9.6px;line-height:9.6px;color:#000;letter-spacing:-0.267px;left:85.40px;text-shadow:0 0 0 rgba(0,0,0,.4);">31.07.2021</span>
<span class="t" style="top:222px;font-size:9.6px;line-height:9.6px;color:#000;letter-spacing:-0.192px;left:141.20px;text-shadow:0 0 0 rgba(0,0,0,.4);">PRODUKT NR 5649; KOD 5649</span>
<span class="t" style="top:222px;font-size:9.6px;line-height:9.6px;color:#000;left:544.00px;text-shadow:0 0 0 rgba(0,0,0,.4);">0</span>
<span class="t" style="top:222px;font-size:9.6px;line-height:9.6px;color:#000;letter-spacing:-0.400px;left:597.80px;text-shadow:0 0 0 rgba(0,0,0,.4);">190</span>
<span class="t" style="top:222px;font-size:9.6px;line-height:9.6px;color:#000;left:639.40px;text-shadow:0 0 0 rgba(0,0,0,.4);">0,00</span>
<span class="t" style="top:222px;font-size:9.6px;line-height:9.6px;color:#000;left:709.60px;text-shadow:0 0 0 rgba(0,0,0,.4);">0,00</span>
<span class="t" style="top:222px;font-size:9.6px;line-height:9.6px;color:#ff0000;font-weight:bold;letter-spacing:-0.700px;left:754.90px;">709</span>
<span class="t" style="top:249px;font-size:9.6px;line-height:9.6px;color:#000;letter-spacing:-0.800px;left:57.70px;text-shadow:0 0 0 rgba(0,0,0,.4);">483</span>
<span class="t" style="top:249px;font-size:9.6px;line-height:9.6px;color:#000;letter-spacing:-0.267px;left:85.40px;text-shadow:0 0 0 rgba(0,0,0,.4);">31.07.2021</span>
<span class="t" style="top:249px;font-size:9.6px;line-height:9.6px;color:#000;letter-spacing:-0.192px;left:141.20px;text-shadow:0 0 0 rgba(0,0,0,.4);">PRODUKT NR 4851; KOD 4851</span>
<span class="t" style="top:249px;font-size:9.6px;line-height:9.6px;color:#000;left:544.00px;text-shadow:0 0 0 rgba(0,0,0,.4);">0</span>
<span class="t" style="top:249px;font-size:9.6px;line-height:9.6px;color:#000;letter-spacing:-0.400px;left:597.80px;text-shadow:0 0 0 rgba(0,0,0,.4);">206</span>
<span class="t" style="top:249px;font-size:9.6px;line-height:9.6px;color:#000;left:639.40px;text-shadow:0 0 0 rgba(0,0,0,.4);">0,00</span>
<span class="t" style="top:249px;font-size:9.6px;line-height:9.6px;color:#000;left:709.60px;text-shadow:0 0 0 rgba(0,0,0,.4);">0,00</span>
<span class="t" style="top:249px;font-size:9.6px;line-height:9.6px;color:#ff0000;font-weight:bold;letter-spacing:-0.700px;left:754.90px;">709</span>
<span class="t" style="top:276px;font-size:9.6px;line-height:9.6px;color:#000;letter-spacing:-0.800px;left:57.70px;text-shadow:0 0 0 rgba(0,0,0,.4);">484</span>
<span class="t" style="top:276px;font-size:9.6px;line-height:9.6px;color:#000;letter-spacing:-0.267px;left:85.40px;text-shadow:0 0 0 rgba(0,0,0,.4);">31.07.2021</span>
<span class="t" style="top:276px;font-size:9.6px;line-height:9.6px;color:#000;letter-spacing:-0.192px;left:141.20px;text-shadow:0 0 0 rgba(0,0,0,.4);">PRODUKT NR 5571; KOD 5571</span>
<span class="t" style="top:276px;font-size:9.6px;line-height:9.6px;color:#000;left:544.00px;text-shadow:0 0 0 rgba(0,0,0,.4);">0</span>
<span class="t" style="top:276px;font-size:9.6px;line-height:9.6px;color:#000;letter-spacing:-0.400px;left:597.80px;text-shadow:0 0 0 rgba(0,0,0,.4);">216</span>
<span class="t" style="top:276px;font-size:9.6px;line-height:9.6px;color:#000;left:639.40px;text-shadow:0 0 0 rgba(0,0,0,.4);">0,00</span>
<span class="t" style="top:276px;font-size:9.6px;line-height:9.6px;color:#000;left:709.60px;text-shadow:0 0 0 rgba(0,0,0,.4);">0,00</span>
<span class="t" style="top:276px;font-size:9.6px;line-height:9.6px;color:#ff0000;font-weight:bold;letter-spacing:-0.700px;left:754.90px;">709</span>
<span class="t" style="top:303px;font-size:9.6px;line-height:9.6px;color:#000;letter-spacing:-0.800px;left:57.70px;text-shadow:0 0 0 rgba(0,0,0,.4);">485</span>
<span class="t" style="top:303px;font-size:9.6px;line-height:9.6px;color:#000;letter-spacing:-0.267px;left:85.40px;text-shadow:0 0 0 rgba(0,0,0,.4);">31.07.2021</span>
<span class="t" style="top:303px;font-size:9.6px;line-height:9.6px;color:#000;letter-spacing:-0.192px;left:141.20px;text-shadow:0 0 0 rgba(0,0,0,.4);">PRODUKT NR 5626; KOD 5626</span>
<span class="t" style="top:303px;font-size:9.6px;line-height:9.6px;color:#000;left:544.00px;text-shadow:0 0 0 rgba(0,0,0,.4);">0</span>
<span class="t" style="top:303px;font-size:9.6px;line-height:9.6px;color:#000;letter-spacing:-0.400px;left:597.80px;text-shadow:0 0 0 rgba(0,0,0,.4);">342</span>
<span class="t" style="top:303px;font-size:9.6px;line-height:9.6px;color:#000;left:639.40px;text-shadow:0 0 0 rgba(0,0,0,.4);">0,00</span>
<span class="t" style="top:303px;font-size:9.6px;line-height:9.6px;color:#000;left:709.60px;text-shadow:0 0 0 rgba(0,0,0,.4);">0,00</span>
<span class="t" style="top:303px;font-size:9.6px;line-height:9.6px;color:#ff0000;font-weight:bold;letter-spacing:-0.700px;left:754.90px;">709</span>
<span class="t" style="top:330px;font-size:9.6px;line-height:9.6px;color:#000;letter-spacing:-0.800px;left:57.70px;text-shadow:0 0 0 rgba(0,0,0,.4);">486</span>
<span class="t" style="top:330px;font-size:9.6px;line-height:9.6px;color:#000;letter-spacing:-0.267px;left:85.40px;text-shadow:0 0 0 rgba(0,0,0,.4);">31.07.2021</span>
<span class="t" style="top:330px;font-size:9.6px;line-height:9.6px;color:#000;letter-spacing:-0.192px;left:141.20px;text-shadow:0 0 0 rgba(0,0,0,.4);">PRODUKT NR 5650; KOD 5650</span>
<span class="t" style="top:330px;font-size:9.6px;line-height:9.6px;color:#000;left:544.00px;text-shadow:0 0 0 rgba(0,0,0,.4);">0</span>
<span class="t" style="top:330px;font-size:9.6px;line-height:9.6px;color:#000;letter-spacing:-0.400px;left:597.80px;text-shadow:0 0 0 rgba(0,0,0,.4);">388</span>
<span class="t" style="top:330px;font-size:9.6px;line-height:9.6px;color:#000;left:639.40px;text-shadow:0 0 0 rgba(0,0,0,.4);">0,00</span>
<span class="t" style="top:330px;font-size:9.6px;line-height:9.6px;color:#000;left:709.60px;text-shadow:0 0 0 rgba(0,0,0,.4);">0,00</span>
<span class="t" style="top:330px;font-size:9.6px;line-height:9.6px;color:#ff0000;font-weight:bold;letter-spacing:-0.700px;left:754.90px;">709</span>
<span class="t" style="top:356px;font-size:9.6px;line-height:9.6px;color:#000;letter-spacing:-0.800px;left:57.70px;text-shadow:0 0 0 rgba(0,0,0,.4);">487</span>
<span class="t" style="top:356px;font-size:9.6px;line-height:9.6px;color:#000;letter-spacing:-0.267px;left:85.40px;text-shadow:0 0 0 rgba(0,0,0,.4);">31.07.2021</span>
<span class="t" style="top:356px;font-size:9.6px;line-height:9.6px;color:#000;letter-spacing:-0.192px;left:141.20px;text-shadow:0 0 0 rgba(0,0,0,.4);">PRODUKT NR 5590; KOD 5590</span>
<span class="t" style="top:356px;font-size:9.6px;line-height:9.6px;color:#000;left:544.00px;text-shadow:0 0 0 rgba(0,0,0,.4);">0</span>
<span class="t" style="top:356px;font-size:9.6px;line-height:9.6px;color:#000;letter-spacing:-0.400px;left:597.80px;text-shadow:0 0 0 rgba(0,0,0,.4);">356</span>
<span class="t" style="top:356px;font-size:9.6px;line-height:9.6px;color:#000;left:639.40px;text-shadow:0 0 0 rgba(0,0,0,.4);">0,00</span>
<span class="t" style="top:356px;font-size:9.6px;line-height:9.6px;color:#000;left:709.60px;text-shadow:0 0 0 rgba(0,0,0,.4);">0,00</span>
<span class="t" style="top:356px;font-size:9.6px;line-height:9.6px;color:#ff0000;font-weight:bold;letter-spacing:-0.700px;left:754.90px;">709</span>
<span class="t" style="top:383px;font-size:9.6px;line-height:9.6px;color:#000;letter-spacing:-0.800px;left:57.70px;text-shadow:0 0 0 rgba(0,0,0,.4);">488</span>
<span class="t" style="top:383px;font-size:9.6px;line-height:9.6px;color:#000;letter-spacing:-0.267px;left:85.40px;text-shadow:0 0 0 rgba(0,0,0,.4);">31.07.2021</span>
<span class="t" style="top:383px;font-size:9.6px;line-height:9.6px;color:#000;letter-spacing:-0.192px;left:141.20px;text-shadow:0 0 0 rgba(0,0,0,.4);">PRODUKT NR 5657; KOD 5657</span>
<span class="t" style="top:383px;font-size:9.6px;line-height:9.6px;color:#000;left:544.00px;text-shadow:0 0 0 rgba(0,0,0,.4);">0</span>
<span class="t" style="top:383px;font-size:9.6px;line-height:9.6px;color:#000;letter-spacing:-0.400px;left:597.80px;text-shadow:0 0 0 rgba(0,0,0,.4);">400</span>
<span class="t" style="top:383px;font-size:9.6px;line-height:9.6px;color:#000;left:639.40px;text-shadow:0 0 0 rgba(0,0,0,.4);">0,00</span>
<span class="t" style="top:383px;font-size:9.6px;line-height:9.6px;color:#000;left:709.60px;text-shadow:0 0 0 rgba(0,0,0,.4);">0,00</span>
<span class="t" style="top:383px;font-size:9.6px;line-height:9.6px;color:#ff0000;font-weight:bold;letter-spacing:-0.700px;left:754.90px;">709</span>
<span class="t" style="top:410px;font-size:9.6px;line-height:9.6px;color:#000;letter-spacing:-0.800px;left:57.70px;text-shadow:0 0 0 rgba(0,0,0,.4);">489</span>
<span class="t" style="top:410px;font-size:9.6px;line-height:9.6px;color:#000;letter-spacing:-0.267px;left:85.40px;text-shadow:0 0 0 rgba(0,0,0,.4);">31.07.2021</span>
<span class="t" style="top:410px;font-size:9.6px;line-height:9.6px;color:#000;letter-spacing:-0.192px;left:141.20px;text-shadow:0 0 0 rgba(0,0,0,.4);">PRODUKT NR 5587; KOD 5587</span>
<span class="t" style="top:410px;font-size:9.6px;line-height:9.6px;color:#000;left:544.00px;text-shadow:0 0 0 rgba(0,0,0,.4);">0</span>
<span class="t" style="top:410px;font-size:9.6px;line-height:9.6px;color:#000;letter-spacing:-0.400px;left:597.80px;text-shadow:0 0 0 rgba(0,0,0,.4);">439</span>
<span class="t" style="top:410px;font-size:9.6px;line-height:9.6px;color:#000;left:639.40px;text-shadow:0 0 0 rgba(0,0,0,.4);">0,00</span>
<span class="t" style="top:410px;font-size:9.6px;line-height:9.6px;color:#000;left:709.60px;text-shadow:0 0 0 rgba(0,0,0,.4);">0,00</span>
<span class="t" style="top:410px;font-size:9.6px;line-height:9.6px;color:#ff0000;font-weight:bold;letter-spacing:-0.700px;left:754.90px;">709</span>
<span class="t" style="top:437px;font-size:9.6px;line-height:9.6px;color:#000;letter-spacing:-0.800px;left:57.70px;text-shadow:0 0 0 rgba(0,0,0,.4);">490</span>
<span class="t" style="top:437px;font-size:9.6px;line-height:9.6px;color:#000;letter-spacing:-0.267px;left:85.40px;text-shadow:0 0 0 rgba(0,0,0,.4);">31.07.2021</span>
<span class="t" style="top:437px;font-size:9.6px;line-height:9.6px;color:#000;letter-spacing:-0.192px;left:141.20px;text-shadow:0 0 0 rgba(0,0,0,.4);">PRODUKT NR 5671; KOD 5671</span>
<span class="t" style="top:437px;font-size:9.6px;line-height:9.6px;color:#000;left:544.00px;text-shadow:0 0 0 rgba(0,0,0,.4);">0</span>
<span class="t" style="top:437px;font-size:9.6px;line-height:9.6px;color:#000;letter-spacing:-0.400px;left:597.80px;text-shadow:0 0 0 rgba(0,0,0,.4);">147</span>
<span class="t" style="top:437px;font-size:9.6px;line-height:9.6px;color:#000;left:639.40px;text-shadow:0 0 0 rgba(0,0,0,.4);">0,00</span>
<span class="t" style="top:437px;font-size:9.6px;line-height:9.6px;color:#000;left:709.60px;text-shadow:0 0 0 rgba(0,0,0,.4);">0,00</span>
<span class="t" style="top:437px;font-size:9.6px;line-height:9.6px;color:#ff0000;font-weight:bold;letter-spacing:-0.700px;left:754.90px;">709</span>
<span class="t" style="top:464px;font-size:9.6px;line-height:9.6px;color:#000;letter-spacing:-0.800px;left:57.70px;text-shadow:0 0 0 rgba(0,0,0,.4);">491</span>
<span class="t" style="top:464px;font-size:9.6px;line-height:9.6px;color:#000;letter-spacing:-0.267px;left:85.40px;text-shadow:0 0 0 rgba(0,0,0,.4);">22.07.2021</span>
<span class="t" style="top:464px;font-size:9.6px;line-height:9.6px;color:#000;letter-spacing:-0.192px;left:141.20px;text-shadow:0 0 0 rgba(0,0,0,.4);">PRODUKT NR 5474; KOD 5474; 700x1000x0,8</span>
<span class="t" style="top:464px;font-size:9.6px;line-height:9.6px;color:#000;left:544.00px;text-shadow:0 0 0 rgba(0,0,0,.4);">0</span>
<span class="t" style="top:464px;font-size:9.6px;line-height:9.6px;color:#000;letter-spacing:-0.400px;left:597.80px;text-shadow:0 0 0 rgba(0,0,0,.4);">198</span>
<span class="t" style="top:464px;font-size:9.6px;line-height:9.6px;color:#000;left:639.40px;text-shadow:0 0 0 rgba(0,0,0,.4);">0,00</span>
<span class="t" style="top:464px;font-size:9.6px;line-height:9.6px;color:#000;left:709.60px;text-shadow:0 0 0 rgba(0,0,0,.4);">0,00</span>
<span class="t" style="top:464px;font-size:9.6px;line-height:9.6px;color:#ff0000;font-weight:bold;letter-spacing:-0.700px;left:754.90px;">718</span>
<span class="t" style="top:491px;font-size:9.6px;line-height:9.6px;color:#000;letter-spacing:-0.800px;left:57.70px;text-shadow:0 0 0 rgba(0,0,0,.4);">492</span>
<span class="t" style="top:491px;font-size:9.6px;line-height:9.6px;color:#000;letter-spacing:-0.267px;left:85.40px;text-shadow:0 0 0 rgba(0,0,0,.4);">24.05.2021</span>
<span class="t" style="top:491px;font-size:9.6px;line-height:9.6px;color:#000;letter-spacing:-0.192px;left:141.20px;text-shadow:0 0 0 rgba(0,0,0,.4);">PRODUKT NR 4007; KOD 4007</span>
<span class="t" style="top:491px;font-size:9.6px;line-height:9.6px;color:#000;left:544.00px;text-shadow:0 0 0 rgba(0,0,0,.4);">0</span>
<span class="t" style="top:491px;font-size:9.6px;line-height:9.6px;color:#000;letter-spacing:-0.400px;left:608.00px;text-shadow:0 0 0 rgba(0,0,0,.4);">1</span>
<span class="t" style="top:491px;font-size:9.6px;line-height:9.6px;color:#000;left:639.40px;text-shadow:0 0 0 rgba(0,0,0,.4);">0,00</span>
<span class="t" style="top:491px;font-size:9.6px;line-height:9.6px;color:#000;left:709.60px;text-shadow:0 0 0 rgba(0,0,0,.4);">0,00</span>
<span class="t" style="top:491px;font-size:9.6px;line-height:9.6px;color:#ff0000;font-weight:bold;letter-spacing:-0.700px;left:754.90px;">777</span>
<span class="t" style="top:518px;font-size:9.6px;line-height:9.6px;color:#000;letter-spacing:-0.800px;left:57.70px;text-shadow:0 0 0 rgba(0,0,0,.4);">493</span>
<span class="t" style="top:518px;font-size:9.6px;line-height:9.6px;color:#000;letter-spacing:-0.267px;left:85.40px;text-shadow:0 0 0 rgba(0,0,0,.4);">29.04.2021</span>
<span class="t" style="top:518px;font-size:9.6px;line-height:9.6px;color:#000;letter-spacing:-0.192px;left:141.20px;text-shadow:0 0 0 rgba(0,0,0,.4);">PRODUKT NR 4500; KOD 4500; 0x1540x0</span>
<span class="t" style="top:518px;font-size:9.6px;line-height:9.6px;color:#000;left:544.00px;text-shadow:0 0 0 rgba(0,0,0,.4);">0</span>
<span class="t" style="top:518px;font-size:9.6px;line-height:9.6px;color:#000;letter-spacing:-0.400px;left:597.80px;text-shadow:0 0 0 rgba(0,0,0,.4);">518</span>
<span class="t" style="top:518px;font-size:9.6px;line-height:9.6px;color:#000;left:639.40px;text-shadow:0 0 0 rgba(0,0,0,.4);">0,00</span>
<span class="t" style="top:518px;font-size:9.6px;line-height:9.6px;color:#000;left:709.60px;text-shadow:0 0 0 rgba(0,0,0,.4);">0,00</span>
<span class="t" style="top:518px;font-size:9.6px;line-height:9.6px;color:#ff0000;font-weight:bold;letter-spacing:-0.700px;left:754.90px;">802</span>
<span class="t" style="top:545px;font-size:9.6px;line-height:9.6px;color:#000;letter-spacing:-0.800px;left:57.70px;text-shadow:0 0 0 rgba(0,0,0,.4);">494</span>
<span class="t" style="top:545px;font-size:9.6px;line-height:9.6px;color:#000;letter-spacing:-0.267px;left:84.40px;text-shadow:0 0 0 rgba(0,0,0,.4);">17.12.2018</span>
<span class="t" style="top:545px;font-size:9.6px;line-height:9.6px;color:#000;letter-spacing:-0.192px;left:141.20px;text-shadow:0 0 0 rgba(0,0,0,.4);">PRODUKT NR 3137; KOD 3137</span>
<span class="t" style="top:545px;font-size:9.6px;line-height:9.6px;color:#000;left:544.00px;text-shadow:0 0 0 rgba(0,0,0,.4);">0</span>
<span class="t" style="top:545px;font-size:9.6px;line-height:9.6px;color:#000;letter-spacing:-0.400px;left:597.80px;text-shadow:0 0 0 rgba(0,0,0,.4);">930</span>
<span class="t" style="top:545px;font-size:9.6px;line-height:9.6px;color:#000;left:639.40px;text-shadow:0 0 0 rgba(0,0,0,.4);">0,00</span>
<span class="t" style="top:545px;font-size:9.6px;line-height:9.6px;color:#000;left:709.60px;text-shadow:0 0 0 rgba(0,0,0,.4);">0,00</span>
<span class="t" style="top:545px;font-size:9.6px;line-height:9.6px;color:#ff0000;font-weight:bold;letter-spacing:-0.700px;left:750.60px;">1666</span>
<span class="t" style="top:574px;font-size:10.67px;line-height:10.67px;color:#000;font-weight:bold;letter-spacing:0.075px;left:513.80px;">Razem podmagazyn:</span>
<span class="t" style="top:575px;font-size:10.67px;line-height:10.67px;color:#000;font-weight:bold;left:751.20px;">0,00</span>
<span class="t" style="top:596px;font-size:12px;line-height:12px;color:#000;font-weight:bold;letter-spacing:0.150px;left:581.60px;">Razem</span>
<span class="t" style="top:597px;font-size:10.67px;line-height:10.67px;color:#000;font-weight:bold;left:718.90px;">652 031,78</span>
<span class="t" style="top:622px;font-size:12px;line-height:12px;color:#000;font-weight:bold;letter-spacing:0.150px;left:581.60px;">Razem</span>
<span class="t" style="top:622px;font-size:10.67px;line-height:10.67px;color:#000;font-weight:bold;left:717.60px;">652 031,78</span>
<span class="t" style="top:629px;font-size:12px;line-height:12px;color:#000;font-weight:bold;letter-spacing:0.119px;left:109.50px;">Wartość pozycji z datą</span>
<span class="t" style="top:629px;font-size:12px;line-height:12px;color:#000;font-weight:bold;letter-spacing:0.600px;left:245.80px;">&lt;=</span>
<span class="t" style="top:629px;font-size:12px;line-height:12px;color:#000;font-weight:bold;letter-spacing:-0.600px;left:266.60px;">60</span>
<span class="t" style="top:629px;font-size:12px;line-height:12px;color:#000;font-weight:bold;letter-spacing:-0.300px;left:286.90px;">dni</span>
<span class="t" style="top:630px;font-size:12px;line-height:12px;color:#000;font-weight:bold;letter-spacing:0.133px;left:398.20px;">0,00</span>
<span class="t" style="top:654px;font-size:12px;line-height:12px;color:#000;font-weight:bold;letter-spacing:0.119px;left:116.80px;">Wartość pozycji z datą</span>
<span class="t" style="top:654px;font-size:12px;line-height:12px;color:#000;font-weight:bold;left:252.90px;">&gt;</span>
<span class="t" style="top:654px;font-size:12px;line-height:12px;color:#000;font-weight:bold;letter-spacing:-0.600px;left:266.60px;">60</span>
<span class="t" style="top:654px;font-size:12px;line-height:12px;color:#000;font-weight:bold;letter-spacing:-0.300px;left:286.90px;">dni</span>
<span class="t" style="top:654px;font-size:12px;line-height:12px;color:#000;font-weight:bold;letter-spacing:-0.067px;left:362.20px;">652 031,78</span>
<span class="t" style="top:676px;font-size:12px;line-height:12px;color:#000;font-weight:bold;letter-spacing:-0.040px;left:362.20px;">&lt;koniec wydruku&gt;</span>
<span class="t" style="top:8px;font-size:12px;line-height:12px;color:#fff;letter-spacing:-0.071px;left:27.20px;">Generator raportów</span>
<span class="t" style="top:39px;font-size:11.5px;line-height:11.5px;color:#000;letter-spacing:-0.200px;left:163.80px;">100%</span>
<span class="t" style="top:38px;font-size:11.5px;line-height:11.5px;color:#000;letter-spacing:-1.300px;left:416.30px;">20</span>
<span class="t" style="top:38px;font-size:11.5px;line-height:11.5px;color:#4a4a5e;letter-spacing:-0.300px;left:459.80px;">of 20</span>
<span class="t" style="top:39px;font-size:11.5px;line-height:11.5px;color:#000;letter-spacing:-0.850px;left:590.70px;">Close</span>
<span class="t" style="top:739px;font-size:11.5px;line-height:11.5px;color:#000;letter-spacing:-0.058px;left:7.50px;">Page 20 of 20</span>
</div>
</body>
</html>
